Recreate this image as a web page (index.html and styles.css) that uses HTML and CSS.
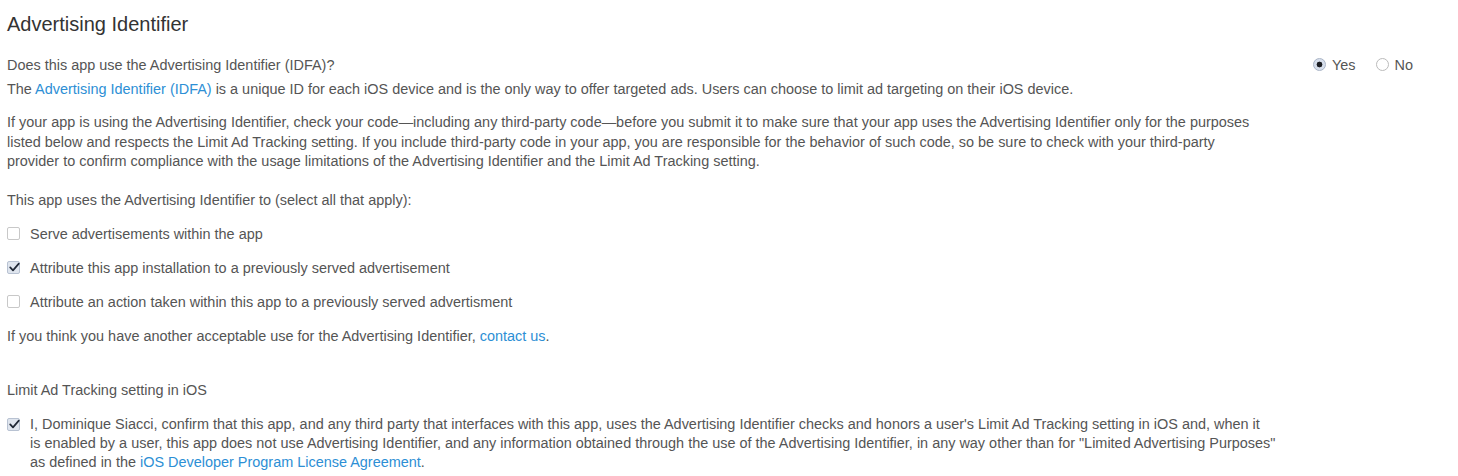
FILE: index.html
```html
<!DOCTYPE html>
<html>
<head>
<meta charset="utf-8">
<link rel="stylesheet" href="styles.css">
</head>
<body>
<div class="page">
  <h1 class="title">Advertising Identifier</h1>
  <div class="question-row">
    <div class="question">Does this app use the Advertising Identifier (IDFA)?</div>
    <div class="radios">
      <label class="radio-opt"><span class="radio checked"></span>Yes</label>
      <label class="radio-opt"><span class="radio"></span>No</label>
    </div>
  </div>
  <div class="content">
    <p class="line intro">The <a href="#">Advertising Identifier (IDFA)</a> is a unique ID for each iOS device and is the only way to offer targeted ads. Users can choose to limit ad targeting on their iOS device.</p>
    <p class="para">If your app is using the Advertising Identifier, check your code—including any third-party code—before you submit it to make sure that your app uses the Advertising Identifier only for the purposes listed below and respects the Limit Ad Tracking setting. If you include third-party code in your app, you are responsible for the behavior of such code, so be sure to check with your third-party provider to confirm compliance with the usage limitations of the Advertising Identifier and the Limit Ad Tracking setting.</p>
    <p class="line select">This app uses the Advertising Identifier to (select all that apply):</p>
    <label class="check-row"><span class="box"></span>Serve advertisements within the app</label>
    <label class="check-row"><span class="box checked"><svg viewBox="0 0 15 15" width="15" height="15"><path d="M3.2 7.4 L6 10.4 L11.8 3.6" fill="none" stroke="#1f2735" stroke-width="1.7" stroke-linecap="round" stroke-linejoin="round"/></svg></span>Attribute this app installation to a previously served advertisement</label>
    <label class="check-row"><span class="box"></span>Attribute an action taken within this app to a previously served advertisment</label>
    <p class="line">If you think you have another acceptable use for the Advertising Identifier, <a href="#">contact us</a>.</p>
    <p class="line section">Limit Ad Tracking setting in iOS</p>
    <label class="check-row multi"><span class="box checked"><svg viewBox="0 0 15 15" width="15" height="15"><path d="M3.2 7.4 L6 10.4 L11.8 3.6" fill="none" stroke="#1f2735" stroke-width="1.7" stroke-linecap="round" stroke-linejoin="round"/></svg></span><span class="multi-text">I, Dominique Siacci, confirm that this app, and any third party that interfaces with this app, uses the Advertising Identifier checks and honors a user's Limit Ad Tracking setting in iOS and, when it<br>is enabled by a user, this app does not use Advertising Identifier, and any information obtained through the use of the Advertising Identifier, in any way other than for "Limited Advertising Purposes"<br>as defined in the <a href="#">iOS Developer Program License Agreement</a>.</span></label>
  </div>
</div>
</body>
</html>
```

FILE: styles.css
```css
html, body {
  margin: 0;
  padding: 0;
  background: #fff;
}
body {
  font-family: "Liberation Sans", Arial, sans-serif;
  font-size: 14.45px;
  color: #555;
}
a {
  color: #2d8fd5;
  text-decoration: none;
}
.page {
  padding: 12px 0 0 7px;
}
.title {
  margin: 0;
  font-size: 20px;
  line-height: 24px;
  font-weight: normal;
  color: #333;
}
.question-row {
  display: flex;
  width: 1406px;
  margin-top: 19px;
  line-height: 20px;
}
.question {
  flex: 1;
}
.radios {
  display: flex;
  gap: 20px;
}
.radio-opt {
  display: flex;
  align-items: center;
  gap: 6px;
}
.radio {
  width: 11px;
  height: 11px;
  border: 1px solid #bbb;
  border-radius: 50%;
  box-sizing: content-box;
  background: #fff;
  position: relative;
  top: -1px;
}
.radio.checked {
  border-color: #a9b4c6;
  background: radial-gradient(circle, #1d1f24 0 2.6px, #d7dfec 3.2px);
}
.content {
  width: 1260px;
  display: flex;
  flex-direction: column;
  gap: 14px;
}
.line {
  margin: 0;
  line-height: 20px;
}
.intro {
  margin-top: 4px;
  white-space: nowrap;
}
.para {
  margin: 0;
  line-height: 19.5px;
}
.select {
  margin-top: 4px;
}
.check-row {
  display: flex;
  align-items: center;
  gap: 10px;
  line-height: 20px;
}
.box {
  width: 13px;
  height: 13px;
  border: 1px solid #c8c8c8;
  border-radius: 2px;
  box-sizing: border-box;
  background: #fff;
  flex: none;
  display: flex;
  position: relative;
}
.box svg {
  position: absolute;
  left: -1px;
  top: -2px;
}
.box.checked {
  background: #dfe5ee;
  border-color: #b8c2d2;
}
.section {
  margin-top: 20px;
}
.check-row.multi {
  align-items: flex-start;
  line-height: 19px;
  margin-top: 1px;
  width: 1320px;
}
.check-row.multi .box {
  margin-top: 3px;
}
.multi-text {
  flex: 1;
}
```
